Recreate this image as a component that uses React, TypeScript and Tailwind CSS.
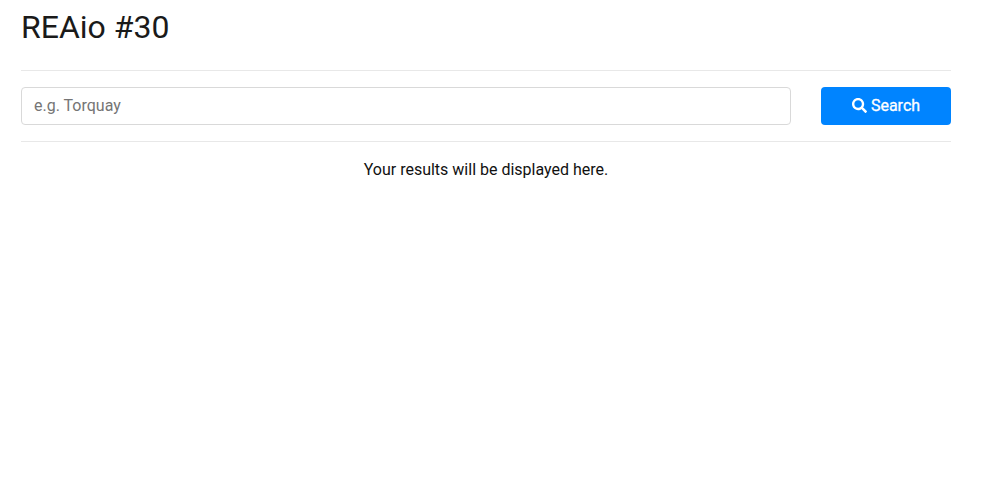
import { FaSearch } from "react-icons/fa"

export default function App() {
  return (
    <div className="h-[478px] w-[982px] overflow-hidden bg-white pl-[21px] pr-[31px] font-['Roboto',sans-serif]">
      <h1 className="pt-[8px] text-[32px] leading-[38px] text-[#1a1a1a]">REAio #30</h1>
      <div className="mt-[24px] border-t border-[#e8e8e8] py-4">
        <div className="flex items-center gap-[30px]">
          <input
            placeholder="e.g. Torquay"
            className="h-[38px] flex-1 rounded border border-[#d9d9d9] px-3 pb-[2px] text-base text-[#495057] placeholder:text-[#757575]"
          />
          <button className="flex h-[38px] w-[130px] items-center justify-center gap-[4px] rounded bg-[#0084ff] pb-[1px] text-base text-white [-webkit-text-stroke:0.3px_white]">
            <FaSearch className="h-[15px] w-[15px]" />
            Search
          </button>
        </div>
      </div>
      <div className="border-t border-[#e8e8e8] pt-4 text-center text-base leading-6 text-[#111111]">
        Your results will be displayed here.
      </div>
    </div>
  )
}
